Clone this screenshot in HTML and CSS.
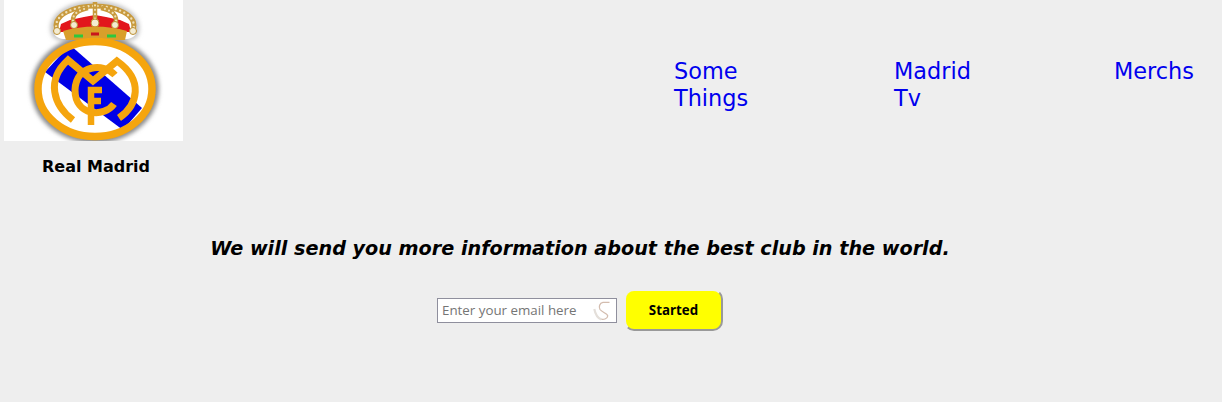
FILE: index.html
```html
<!DOCTYPE html>
<html lang="en">
<head>
<meta charset="UTF-8">
<meta name="viewport" content="width=device-width, initial-scale=1.0">
<title>Real Madrid</title>
<link rel="stylesheet" href="styles.css">
</head>
<body>
<header class="top">
    <div class="brand">
        <svg class="crest" viewBox="0 0 179 141" role="img" aria-label="Real Madrid crest">
            <defs>
                <filter id="soft" x="-20%" y="-20%" width="140%" height="140%"><feGaussianBlur stdDeviation="2.200"/></filter>
                <filter id="tiny" x="-5%" y="-5%" width="110%" height="110%"><feGaussianBlur stdDeviation="0.450"/></filter>
            </defs>
            <rect width="179" height="141" fill="#fff"/>
            <!-- halo -->
            <g filter="url(#soft)">
                <path d="M47 33C42 12 68 1 91 1s49 11 44 32c-1 6-8 8-14 8H61c-6 0-13-2-14-8z" fill="#c4c4c4"/>
                <ellipse cx="91" cy="89" rx="64" ry="54" fill="#8a8a8a"/>
            </g>
            <path d="M50 33C46 14 70 4 91 4s45 10 41 29c-1 4-6 6-11 6H61c-5 0-10-2-11-6z" fill="#fff"/>
            <g filter="url(#tiny)">
                <!-- crown -->
                <path d="M55 32l2-8 9-4 14-3 11-2 11 2 14 3 9 4 2 8z" fill="#e2141b"/>
                <path d="M53 31C47 14 72 6 91 6s44 8 38 25" fill="none" stroke="#c89a3c" stroke-width="5"/>
                <path d="M53 31C47 14 72 6 91 6s44 8 38 25" fill="none" stroke="#efe0b8" stroke-width="2.400" stroke-linecap="round" stroke-dasharray="0 4.600"/>
                <path d="M70 25C66 15 74 10 84 8M111 25C115 15 107 10 97 8M91 23V2" fill="none" stroke="#c89a3c" stroke-width="4.500"/>
                <path d="M70 25C66 15 74 10 84 8M111 25C115 15 107 10 97 8M91 23V2" fill="none" stroke="#efe0b8" stroke-width="2.200" stroke-linecap="round" stroke-dasharray="0 4.400"/>
                <circle cx="70" cy="25" r="3.500" fill="#f4ecd2" stroke="#b98d33"/>
                <circle cx="91" cy="23" r="4" fill="#f4ecd2" stroke="#b98d33"/>
                <circle cx="111" cy="25" r="3.500" fill="#f4ecd2" stroke="#b98d33"/>
                <circle cx="53" cy="31" r="3.500" fill="#f4ecd2" stroke="#b98d33"/>
                <circle cx="129" cy="31" r="3.500" fill="#f4ecd2" stroke="#b98d33"/>
                <path d="M59 31c20-6 44-6 64 0l-2 9H62z" fill="#d99f2b"/>
                <path d="M70 36h9M103 36h9" stroke="#2fc83e" stroke-width="3"/>
                <path d="M87 34h8" stroke="#c8141b" stroke-width="3"/>
                <!-- shield -->
                <ellipse cx="91" cy="89" rx="57" ry="47.500" fill="#fff"/>
                <path d="M66 45L138 108 119 130 41 72z" fill="#0000e6"/>
                <ellipse cx="91" cy="89" rx="57" ry="47.500" fill="none" stroke="#f5a511" stroke-width="7.500"/>
                <!-- monogram -->
                <path d="M111 75C100 63 72 64 71 90 71 116 100 118 110 104" fill="none" stroke="#f5a511" stroke-width="7"/>
                <path d="M69 120C49 105 42 80 64 60L89 81 113 61C140 80 134 105 115 118" fill="none" stroke="#f5a511" stroke-width="7"/>
                <path d="M87 125V90H98M87 101H97" fill="none" stroke="#f5a511" stroke-width="6.500"/>
            </g>
        </svg>
        <p class="brand-name">Real Madrid</p>
    </div>
    <nav class="links">
        <a href="#">Some Things</a>
        <a href="#">Madrid Tv</a>
        <a href="#">Merchs</a>
    </nav>
</header>
<section class="signup">
    <h2>We will send you more information about the best club in the world.</h2>
    <form class="signup-form">
        <div class="email-box">
            <input type="text" placeholder="Enter your email here">
            <svg class="email-mark" viewBox="0 0 20 22" aria-hidden="true">
                <path d="M16.500 2.300H10C6.500 3 5.500 7 7 9.500c2 3 8 4 7.700 6.500C14.500 19 10 20 8 19" fill="none" stroke="#d3bcae" stroke-width="1.300"/>
                <path d="M1.300 9c1 5 3 9 7 10.500" fill="none" stroke="#e4dfda" stroke-width="2.200"/>
            </svg>
        </div>
        <button type="button">Started</button>
    </form>
</section>
</body>
</html>
```

FILE: styles.css
```css
html, body {
    margin: 0;
    padding: 0;
}
body {
    background-color: #eee;
    font-family: "DejaVu Sans", sans-serif;
    height: 402px;
    overflow: hidden;
}
.top {
    display: flex;
    justify-content: space-between;
    align-items: flex-start;
}
.brand {
    width: 184px;
    padding-left: 4px;
}
.crest {
    display: block;
    width: 179px;
    height: 141px;
}
.brand-name {
    margin: 16px 0 0;
    width: 184px;
    text-align: center;
    font-size: 16px;
    font-weight: bold;
    color: #000;
}
.links {
    display: flex;
    width: 548px;
    padding-top: 58px;
}
.links a {
    width: 110px;
    margin-right: 110px;
    font-size: 22.400px;
    line-height: 27px;
    color: #0000ee;
    text-decoration: none;
}
.links a:last-child {
    width: 108px;
    margin-right: 0;
}
.signup {
    margin-top: 61px;
    padding-right: 62px;
    text-align: center;
}
.signup h2 {
    margin: 0 0 29px;
    font-size: 19.200px;
    font-style: italic;
    font-weight: bold;
    color: #000;
}
.signup-form {
    display: flex;
    justify-content: center;
    align-items: center;
    gap: 7px;
}
.email-box {
    position: relative;
}
.email-box input {
    display: block;
    box-sizing: border-box;
    width: 180px;
    height: 25px;
    padding: 0 4px;
    border: 1px solid #8f8f9d;
    background-color: #fff;
    font-family: "Open Sans", sans-serif;
    font-size: 13.333px;
}
.email-box input::placeholder {
    color: #757575;
}
.email-mark {
    position: absolute;
    top: 2px;
    right: 4px;
    width: 20px;
    height: 22px;
}
button {
    width: 99px;
    height: 42px;
    border: 2px solid #eee;
    border-right-color: #999;
    border-bottom-color: #999;
    border-radius: 10px;
    background-color: #ff0;
    color: #000;
    font-family: "Open Sans", sans-serif;
    font-size: 13.333px;
    font-weight: bold;
    cursor: pointer;
}
```
